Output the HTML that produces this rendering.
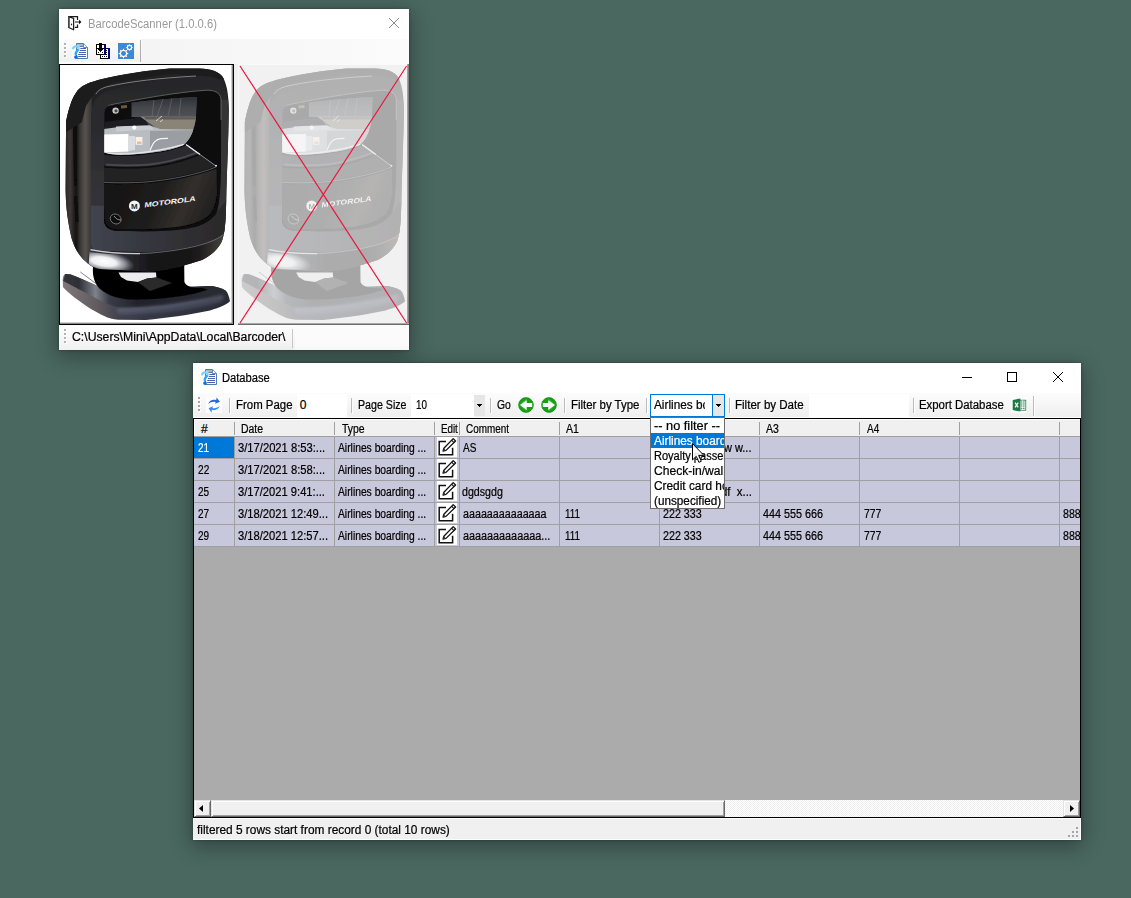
<!DOCTYPE html>
<html><head><meta charset="utf-8"><title>BarcodeScanner</title>
<style>

html,body{margin:0;padding:0}
body{width:1131px;height:898px;background:#4a6860;position:relative;overflow:hidden;font-family:"Liberation Sans",sans-serif;}
.a{position:absolute}
.t{position:absolute;white-space:pre;font-family:"Liberation Sans",sans-serif;-webkit-text-stroke:0.22px currentColor}
.win{position:absolute;background:#fff;box-shadow:0 5px 20px 2px rgba(0,0,0,.33),0 0 3px rgba(0,0,0,.3)}
.sep{position:absolute;width:1px;background:#bdbdbd}
.grip i{position:absolute;width:2px;height:2px;background:#b4b4b4;left:0}
.cell{position:absolute;overflow:hidden;white-space:pre;font-size:11px;line-height:21px;height:21px;color:#000}

</style></head>
<body>
<div class="win" style="left:59px;top:9px;width:350px;height:341px">
<svg class="a" style="left:8px;top:6px" width="16" height="16" viewBox="0 0 16 16"><path d="M1.6,1.6 H10.5 V4.9 M10.5,9.4 V12.3 H7.8" fill="none" stroke="#1c1c1c" stroke-width="1.25"/><path d="M1.7,1.6 L6.6,3.3 V14.8 L1.7,12.5 Z" fill="#fff" stroke="#1c1c1c" stroke-width="1.25" stroke-linejoin="round"/><path d="M1.9,2 V12.3" stroke="#4a4a4a" stroke-width="1.5" fill="none"/><ellipse cx="4.5" cy="9.4" rx=".65" ry=".95" fill="#222"/><rect x="8" y="6.15" width="4.3" height="1.75" fill="#7a7a7a"/><path d="M12,4.7 L14.5,7 L12,9.2 Z" fill="#111"/></svg>
<span class="t" style="left:29.30px;top:6.64px;font-size:12px;line-height:16px;color:#9a9a9a;transform:scaleX(0.9386);transform-origin:0 0;-webkit-text-stroke:0;">BarcodeScanner (1.0.0.6)</span>
<svg class="a" style="left:329px;top:8px" width="12" height="12" viewBox="0 0 12 12"><path d="M1,1 L11,11 M11,1 L1,11" stroke="#8c8c8c" stroke-width="1" fill="none"/></svg>
<div class="a" style="left:0;top:30px;width:350px;height:25px;background:linear-gradient(to right,#f4f4f4 82px,#fbfbfb)"></div>
<div class="a" style="left:0;top:30px;width:83px;height:25px;background:linear-gradient(#fdfdfd,#f1f1f1 88%,#fff 96%);border-radius:0 2px 2px 0"></div>
<div class="a grip" style="left:5px;top:34px;width:3px;height:16px"><i style="top:1px;left:1px;background:#fff"></i><i style="top:0px;background:#b4b4b4"></i><i style="top:5px;left:1px;background:#fff"></i><i style="top:4px;background:#b4b4b4"></i><i style="top:9px;left:1px;background:#fff"></i><i style="top:8px;background:#b4b4b4"></i><i style="top:13px;left:1px;background:#fff"></i><i style="top:12px;background:#b4b4b4"></i></div>
<svg class="a" style="left:13px;top:34px" width="16" height="16" viewBox="0 0 16 16"><rect width="16" height="16" fill="#fdfdfd"/><path d="M4.5,0.5 H11.6 L15.5,4.4 V15.5 H4.5 Z" fill="#fff" stroke="#4f7fa3" stroke-width="1"/><path d="M5,1 H11.4 L11.4,3 L5,2.6 Z" fill="#9fb8c8"/><path d="M11.5,0.8 V4.5 H15.3" fill="#f4f8fb" stroke="#4f7fa3" stroke-width=".9"/><path d="M7.4,3.4 H11 M8.3,5.5 H14 M7.8,7.5 H14 M7,9.5 H14 M6.2,11.5 H14 M6.2,13.5 H14" stroke="#4c60b4" stroke-width="1" fill="none"/><path d="M1.2,5.4 C1.6,3 6.6,2.6 6.6,5.6 C6.6,7.8 3.6,8.4 3.7,11" fill="none" stroke="#7fd2ff" stroke-width="2.3" stroke-linecap="round"/><path d="M5.8,7 C4.8,8.2 3.7,9.2 3.7,11" fill="none" stroke="#27a6f7" stroke-width="2.2" stroke-linecap="round"/><circle cx="4" cy="14.1" r="1.9" fill="#0d6fe6"/></svg>
<svg class="a" style="left:37px;top:34px" width="14" height="16" viewBox="0 0 14 16" shape-rendering="crispEdges"><rect x="3" y="0" width="3" height="1" fill="#000"/><rect x="0" y="1" width="8" height="1" fill="#000"/><rect x="8" y="1" width="2" height="1" fill="#000080"/><rect x="0" y="2" width="1" height="1" fill="#000"/><rect x="1" y="2" width="2" height="1" fill="#fff"/><rect x="3" y="2" width="3" height="1" fill="#000"/><rect x="6" y="2" width="2" height="1" fill="#fff"/><rect x="8" y="2" width="2" height="1" fill="#000080"/><rect x="0" y="3" width="1" height="1" fill="#000"/><rect x="1" y="3" width="2" height="1" fill="#fff"/><rect x="3" y="3" width="3" height="1" fill="#000"/><rect x="6" y="3" width="2" height="1" fill="#fff"/><rect x="8" y="3" width="2" height="1" fill="#000080"/><rect x="0" y="4" width="1" height="1" fill="#000"/><rect x="1" y="4" width="2" height="1" fill="#fff"/><rect x="3" y="4" width="3" height="1" fill="#000"/><rect x="6" y="4" width="2" height="1" fill="#fff"/><rect x="8" y="4" width="2" height="1" fill="#000080"/><rect x="0" y="5" width="8" height="1" fill="#000"/><rect x="8" y="5" width="1" height="1" fill="#000080"/><rect x="9" y="5" width="3" height="1" fill="#000"/><rect x="12" y="5" width="2" height="1" fill="#000080"/><rect x="0" y="6" width="1" height="1" fill="#000"/><rect x="1" y="6" width="1" height="1" fill="#fff"/><rect x="2" y="6" width="5" height="1" fill="#000"/><rect x="7" y="6" width="1" height="1" fill="#fff"/><rect x="8" y="6" width="2" height="1" fill="#000080"/><rect x="10" y="6" width="2" height="1" fill="#fff"/><rect x="12" y="6" width="2" height="1" fill="#000080"/><rect x="0" y="7" width="1" height="1" fill="#000"/><rect x="1" y="7" width="2" height="1" fill="#fff"/><rect x="3" y="7" width="3" height="1" fill="#000"/><rect x="6" y="7" width="2" height="1" fill="#fff"/><rect x="8" y="7" width="2" height="1" fill="#000080"/><rect x="10" y="7" width="1" height="1" fill="#000"/><rect x="11" y="7" width="1" height="1" fill="#fff"/><rect x="12" y="7" width="2" height="1" fill="#000080"/><rect x="0" y="8" width="1" height="1" fill="#000"/><rect x="1" y="8" width="3" height="1" fill="#fff"/><rect x="4" y="8" width="1" height="1" fill="#000"/><rect x="5" y="8" width="3" height="1" fill="#fff"/><rect x="8" y="8" width="2" height="1" fill="#000080"/><rect x="10" y="8" width="2" height="1" fill="#fff"/><rect x="12" y="8" width="2" height="1" fill="#000080"/><rect x="0" y="9" width="1" height="1" fill="#000"/><rect x="1" y="9" width="1" height="1" fill="#fff"/><rect x="2" y="9" width="1" height="1" fill="#000"/><rect x="3" y="9" width="1" height="1" fill="#fff"/><rect x="4" y="9" width="1" height="1" fill="#ddd"/><rect x="5" y="9" width="1" height="1" fill="#fff"/><rect x="6" y="9" width="1" height="1" fill="#000"/><rect x="7" y="9" width="1" height="1" fill="#fff"/><rect x="8" y="9" width="2" height="1" fill="#000080"/><rect x="10" y="9" width="1" height="1" fill="#000"/><rect x="11" y="9" width="1" height="1" fill="#fff"/><rect x="12" y="9" width="2" height="1" fill="#000080"/><rect x="0" y="10" width="1" height="1" fill="#000"/><rect x="1" y="10" width="7" height="1" fill="#fff"/><rect x="8" y="10" width="2" height="1" fill="#000080"/><rect x="10" y="10" width="2" height="1" fill="#fff"/><rect x="12" y="10" width="2" height="1" fill="#000080"/><rect x="0" y="11" width="8" height="1" fill="#000"/><rect x="8" y="11" width="2" height="1" fill="#000080"/><rect x="10" y="11" width="1" height="1" fill="#000"/><rect x="11" y="11" width="1" height="1" fill="#fff"/><rect x="12" y="11" width="2" height="1" fill="#000080"/><rect x="4" y="12" width="1" height="1" fill="#000"/><rect x="5" y="12" width="7" height="1" fill="#fff"/><rect x="12" y="12" width="2" height="1" fill="#000080"/><rect x="4" y="13" width="1" height="1" fill="#000"/><rect x="5" y="13" width="1" height="1" fill="#fff"/><rect x="6" y="13" width="1" height="1" fill="#000"/><rect x="7" y="13" width="1" height="1" fill="#fff"/><rect x="8" y="13" width="1" height="1" fill="#000"/><rect x="9" y="13" width="1" height="1" fill="#fff"/><rect x="10" y="13" width="1" height="1" fill="#000"/><rect x="11" y="13" width="1" height="1" fill="#fff"/><rect x="12" y="13" width="2" height="1" fill="#000080"/><rect x="4" y="14" width="1" height="1" fill="#000"/><rect x="5" y="14" width="7" height="1" fill="#fff"/><rect x="12" y="14" width="2" height="1" fill="#000080"/><rect x="4" y="15" width="8" height="1" fill="#000"/><rect x="12" y="15" width="2" height="1" fill="#000080"/></svg>
<svg class="a" style="left:59px;top:34px" width="16" height="16" viewBox="0 0 16 16"><rect width="16" height="16" fill="#3b8ad6"/><polygon points="10.21,9.97 10.21,11.13 9.32,11.02 8.53,12.92 9.24,13.48 8.43,14.29 7.87,13.58 5.97,14.37 6.08,15.26 4.92,15.26 5.03,14.37 3.13,13.58 2.57,14.29 1.76,13.48 2.47,12.92 1.68,11.02 0.79,11.13 0.79,9.97 1.68,10.08 2.47,8.18 1.76,7.62 2.57,6.81 3.13,7.52 5.03,6.73 4.92,5.84 6.08,5.84 5.97,6.73 7.87,7.52 8.43,6.81 9.24,7.62 8.53,8.18 9.32,10.08" fill="#fff"/><circle cx="5.5" cy="10.55" r="2.45" fill="#3886d6"/><polygon points="14.82,4.09 14.82,4.91 14.18,4.83 13.62,6.19 14.13,6.59 13.54,7.18 13.14,6.67 11.78,7.23 11.86,7.87 11.04,7.87 11.12,7.23 9.76,6.67 9.36,7.18 8.77,6.59 9.28,6.19 8.72,4.83 8.08,4.91 8.08,4.09 8.72,4.17 9.28,2.81 8.77,2.41 9.36,1.82 9.76,2.33 11.12,1.77 11.04,1.13 11.86,1.13 11.78,1.77 13.14,2.33 13.54,1.82 14.13,2.41 13.62,2.81 14.18,4.17" fill="#fff"/><circle cx="11.45" cy="4.5" r="1.45" fill="#3886d6"/></svg>
<div class="sep" style="left:81px;top:31px;height:22px;background:#b0b0b0"></div>
<div class="a" style="left:0;top:55px;width:175px;height:261px;background:#000"></div>
<div class="a" style="left:1px;top:56px;width:173px;height:259px;background:#fff;overflow:hidden"><svg class="a" style="left:0;top:0" width="173" height="259" viewBox="60 65 173 259">
<defs>
 <linearGradient id="gSidea" gradientUnits="userSpaceOnUse" x1="65" y1="0" x2="92" y2="0">
  <stop offset="0" stop-color="#2a2726"/><stop offset=".2" stop-color="#3b3735"/><stop offset=".42" stop-color="#141313"/><stop offset=".55" stop-color="#3a3634"/><stop offset=".75" stop-color="#57524f"/><stop offset=".95" stop-color="#3b3938"/><stop offset="1" stop-color="#2a2a2d"/>
 </linearGradient>
 <linearGradient id="gFronta" x1="0" y1="0" x2="0" y2="1">
  <stop offset="0" stop-color="#272729"/><stop offset=".5" stop-color="#2e2f33"/><stop offset="1" stop-color="#33343c"/>
 </linearGradient>
 <linearGradient id="gLowa" gradientUnits="userSpaceOnUse" x1="91" y1="0" x2="226" y2="0">
  <stop offset="0" stop-color="#41444f"/><stop offset=".35" stop-color="#373941"/><stop offset=".7" stop-color="#2f2f33"/><stop offset="1" stop-color="#2b2929"/>
 </linearGradient>
 <linearGradient id="gGlassa" gradientUnits="userSpaceOnUse" x1="0" y1="97" x2="0" y2="117">
  <stop offset="0" stop-color="#2e3034"/><stop offset=".5" stop-color="#43464b"/><stop offset="1" stop-color="#505257"/>
 </linearGradient>
 <linearGradient id="gPanela" gradientUnits="userSpaceOnUse" x1="110" y1="185" x2="210" y2="230">
  <stop offset="0" stop-color="#151414"/><stop offset=".45" stop-color="#1f1d1c"/><stop offset=".7" stop-color="#332f2d"/><stop offset="1" stop-color="#1d1b1b"/>
 </linearGradient>
 <linearGradient id="gUndera" gradientUnits="userSpaceOnUse" x1="84" y1="0" x2="226" y2="0">
  <stop offset="0" stop-color="#3a3b40"/><stop offset=".3" stop-color="#2a2b30"/><stop offset=".5" stop-color="#121213"/><stop offset=".8" stop-color="#1b1a1a"/><stop offset="1" stop-color="#4a4542"/>
 </linearGradient>
 <radialGradient id="gHia" gradientUnits="userSpaceOnUse" cx="104" cy="261.5" r="31" gradientTransform="translate(104 261.5) scale(1 .36) translate(-104 -261.5)">
  <stop offset="0" stop-color="#fff" stop-opacity="1"/><stop offset=".4" stop-color="#f6f7f9" stop-opacity=".96"/><stop offset=".7" stop-color="#c9ccd4" stop-opacity=".6"/><stop offset="1" stop-color="#8a8c96" stop-opacity="0"/>
 </radialGradient>
 <linearGradient id="gBasea" gradientUnits="userSpaceOnUse" x1="62" y1="0" x2="230" y2="0">
  <stop offset="0" stop-color="#7f777a"/><stop offset=".2" stop-color="#635d60"/><stop offset=".33" stop-color="#43434f"/><stop offset=".5" stop-color="#353846"/><stop offset="1" stop-color="#2a2c35"/>
 </linearGradient>
 <linearGradient id="gBaseTopa" gradientUnits="userSpaceOnUse" x1="62" y1="0" x2="230" y2="0">
  <stop offset="0" stop-color="#34353c"/><stop offset=".1" stop-color="#2e2f37"/><stop offset=".2" stop-color="#7d828c"/><stop offset=".28" stop-color="#3a3c46"/><stop offset=".45" stop-color="#22232a"/><stop offset="1" stop-color="#2a2c34"/>
 </linearGradient>
 <filter id="b1a" x="-10%" y="-10%" width="120%" height="120%"><feGaussianBlur stdDeviation="0.55"/></filter>
 <filter id="b2a" x="-30%" y="-30%" width="160%" height="160%"><feGaussianBlur stdDeviation="1.4"/></filter>
 <clipPath id="cBodya"><path d="M66,132 L65.6,190 C66,210 68,222 71.5,238 C75,250 80,256 84,260 C90,266 95,268 100,269 L150,271.5 C170,270 190,264 202,260 C212,255 219,248 222,241 C225,233 226,222 226.4,190 L228.4,132 L228.8,110 C228.6,95 227,83 222,76 C217,70 208,68.4 194,68.4 L170,68.4 C150,70 120,74 98,80 C88,83 80,86 76,93 C71,100 68,112 66,122 Z"/></clipPath>
 <clipPath id="cUndera"><path d="M89.5,252 C100,254 130,255.5 150,254.5 L226,240 L226,276 L88,276 Z"/></clipPath>
 <clipPath id="cGlassa"><path d="M104.3,112 C105,108.5 106.5,106.8 108.3,106.1 C135,101.5 170,98.2 196.9,96.9 L195.9,117.6 C195.4,123 194.5,126 193.4,129.1 C192,134 190,138 187.7,140.6 C186.5,142.5 185,144 183,145.2 C175,148.5 165,150.8 155.5,152.1 C145,153.8 130,155 121,155 C115,154.8 109,154 104.3,152.6 Z"/></clipPath>
</defs>
<g filter="url(#b1a)">
 <!-- base -->
 <path d="M65.2,274 C63,275 62.5,279 62.8,282 L63,287 C68,293 80,302 91.4,309.2 C100,314 108,319 118,319.8 L146,320 C165,318 190,315 210,310.5 C220,307.5 228,304 230,301 C229,296 227.5,292 225.6,290.5 C220,287.5 214,285.8 208,286 L150,288 L100,287 C88,282 76,276 70,274 Z" fill="url(#gBasea)"/>
 <path d="M65.2,274 C70,273.5 76,276 100,287 L112,294 L208,286 C214,285.8 220,287.5 225.6,290.5 C222,294.5 200,300 170,304.5 C150,307 130,308 118,307.4 C110,305 104,302.5 98.4,299.5 L63.2,281 Z" fill="url(#gBaseTopa)"/>
 <path d="M116,308 C140,308 180,304 222,295 L224,298.5 C200,305 150,313 118,313.5 Z" fill="#6b7086" opacity=".55" filter="url(#b2a)"/>
 <path d="M120,313 C150,313.5 190,309 222,300" fill="none" stroke="#4d5164" stroke-width="3" opacity=".7" filter="url(#b2a)"/>
 <path d="M80.3,272 L98,285" stroke="#333" stroke-width=".6" fill="none"/>
 <!-- stand -->
 <path d="M93,266 L184.2,263 L184.4,282 C186,286 192,288.5 202,287.8 L208,289.5 C190,297 150,300.5 128,299.5 C110,297.5 99,290.5 95.5,283 C93,278 92.5,272 93,266 Z" fill="#060606"/>
 <path d="M118.5,272.6 L156,272.4 L156.4,277.5 L147,278.5 L138,282 L127,280.5 L121,277 Z" fill="#ececee"/>
 <path d="M138,282 L147,278.5 L156.4,277.5 L172,283 L150,291 Z" fill="#2a292c"/>
 <!-- body -->
 <g clip-path="url(#cBodya)">
  <rect x="60" y="65" width="173" height="210" fill="#222224"/>
  <rect x="62" y="65" width="30" height="210" fill="url(#gSidea)"/>
  <path d="M73,120 L76.5,118 L77,185 L74,186 Z M74,196 L77.2,196 L78.5,222 L75.5,222 Z" fill="#070707"/>
  <path d="M62,105 L80,86 L100,78.5 L170,66 L232,66 L232,80 L170,73.5 L112,83 L95,92 L86,106 L82,122 L62,135 Z" fill="#1d1c1c"/>
  <!-- front face -->
  <path d="M91,120 C91,104 96,95 108,91 C130,84 170,77 196,76 C212,75.5 222,78 225,88 C227,96 228.6,104 228.8,110 L228.4,132 L226.4,190 C226,222 225,233 224,234 C215,242 190,248 150,252 L96,250.5 C92,250 91,247 91,240 Z" fill="url(#gFronta)"/>
  <path d="M218,100 L229,100 L227,232 L218,236 Z" fill="#3a3838" opacity=".8"/>
  <path d="M91,205 L104,205 L104,222 C106,228 112,231 120,231 L150,232 C185,230 205,224 217,212 L226.5,200 L226,222 C225.6,230 225,233 224,234 C215,242 190,248 150,252 L96,250.5 C92,250 91,247 91,240 Z" fill="url(#gLowa)"/>
  <path d="M91,170 L104,170 L104,206 L91,206 Z" fill="#303238" opacity=".7"/>
  <!-- under surface -->
  <path d="M90,249.3 L91,249.5 C110,252.8 130,253.8 150,252.8 C190,249.2 215,242.2 224.5,233.2 L226,262 L150,276 L86,273 L88,256 Z" fill="url(#gUndera)"/>
  <g clip-path="url(#cUndera)"><ellipse cx="104" cy="261.5" rx="31" ry="11.2" fill="url(#gHia)" transform="rotate(9 104 261.5)"/></g>
  <path d="M91,250 C110,253.2 130,254.2 150,253.2 C190,249.6 215,242.6 224.5,233.6" fill="none" stroke="#77787f" stroke-width=".8"/><path d="M90.5,249.6 C105,252.6 120,253.8 140,253.6" fill="none" stroke="#c9ccd2" stroke-width="1.1"/>
 </g>
 <!-- ridge highlight -->
 <path d="M96,94 C98,90 102,88 108,86.5 C130,81.5 160,78 196,76" fill="none" stroke="#7d7f84" stroke-width="1"/>
 <!-- opening -->
 <path d="M104,120 C104,111 106,106 112,104.5 C140,99 175,92.5 205,90.3 C214,89.8 220,92 221,99 L221,160 C221,185 220,205 216,214 C210,222 200,227 185,229 C170,231 150,232 120,231 C110,231 104,228 104,220 Z" fill="#0b0b0c"/>
 <path d="M105,112 C106,107.5 108,105.3 112,104.5 C140,99 175,92.5 205,90.3 C214,89.8 220,92 221,99 L221,120" fill="none" stroke="#6d6f74" stroke-width=".8"/>
 <!-- glass -->
 <g clip-path="url(#cGlassa)">
  <rect x="104" y="96" width="94" height="60" fill="#45484d"/>
  <path d="M131,96 L198,96 L198,117 L131,117 Z" fill="url(#gGlassa)"/>
  <path d="M104,96 L131.5,96 L131.5,117 L144,117.5 L144,122 L126,124.5 L104,127.5 Z" fill="#0d0d0f"/>
  <path d="M104,122 L144,117 L150,128 L104,130 Z" fill="#1b1d21"/>
  <path d="M140,116.6 L197,116.8 L197,130 L158,129.2 Z" fill="#8a8478"/>
  <path d="M144,117 L197,117.2 L197,119.5 L146,119.5 Z" fill="#5b5a58"/>
  <path d="M104,129 L126,126 L150,125.5 L160,129 L197,129.5 L197,156 L104,156 Z" fill="#b9bdc2"/>
  <path d="M150,131 L197,130 L197,156 L150,156 Z" fill="#9a9da1"/>
  <path d="M116,126.5 L150,125.5 L154,129.5 L116,131.5 Z" fill="#c9cdd2"/>
  <path d="M104,134.5 L128.5,134 L128.5,151.5 L104,152.5 Z" fill="#ffffff"/>
  <path d="M128.5,136 L135,136 L135,150 L128.5,151 Z" fill="#d9dde2"/>
  <path d="M135.6,137 L142.4,137 L142.4,144.8 L135.6,144.8 Z" fill="#fbefe6"/>
  <path d="M137,141.5 L141.5,141.5 L141.5,144 L137,144 Z" fill="#e9b9a0"/>
  <path d="M150,150.5 C153,142 156,139.2 161,138.6 L168,138.4" fill="none" stroke="#f6f6f6" stroke-width="1.1"/>
  <path d="M154,100 L152,117 M163,99 L156,120 M172,98 L168,116 M181,97.5 L179,116" fill="none" stroke="#7b8088" stroke-width=".45"/>
  <path d="M156,121 L162,116 M160,122 L163,119.5" fill="none" stroke="#e8eaec" stroke-width=".8"/>
  <path d="M104,153 C120,155.2 150,153.8 184,144.5" fill="none" stroke="#e4e6ea" stroke-width="1.3"/>
 </g>
 <circle cx="115.6" cy="110.6" r="3.2" fill="#c4c6c9"/><circle cx="116" cy="110.8" r="1.6" fill="#47474a"/>
 <path d="M121,105.5 L127,105 L127,108 L121,108.4 Z" fill="#6a5a3a"/>
 <circle cx="134.3" cy="127.6" r="2.1" fill="#fff"/>
 <!-- lower bezels -->
 <path d="M104,154.5 C115,156.5 130,156.5 146,154.5 C160,153 175,150 186,145.5 L200,153.5 C180,161.5 160,165.5 146,166.5 C130,167.5 115,167 104,166 Z" fill="#2b2b2d"/><path d="M106,164.6 C120,165.6 135,165.6 148,164.6 C165,163 182,158.5 197,152.6" fill="none" stroke="#4a4b50" stroke-width="1.6"/>
 <path d="M104,167.5 C115,168.5 130,169 146,168 C165,166.5 185,161.5 201,154.5 L216,166 C200,173 170,179 146,181 C130,182 115,182 104,181.5 Z" fill="#232221"/>
 <path d="M186,144.5 L216,166" fill="none" stroke="#8f959d" stroke-width=".9"/><path d="M186,144.5 L200,154.5" fill="none" stroke="#e6ebf0" stroke-width="1.5"/><circle cx="216" cy="165.8" r="1" fill="#e8e8e8"/>
 <path d="M104,182.3 C115,183 130,183 146,182 C170,180 200,174 216,167" fill="none" stroke="#5f626a" stroke-width=".9"/>
 <!-- logo panel -->
 <path d="M104,184 C115,184.6 130,184.6 146,183.6 C170,181.6 200,175.5 216.5,168.5 L217,196 C216.5,206 214,212 208,217 C200,223 190,225.5 180,227 C165,229.3 150,230.2 120,230 C110,230 104.5,227 104.5,219 Z" fill="url(#gPanela)"/>
 <path d="M104.5,219 C104.5,227 110,230 120,230 C150,230.2 165,229.3 180,227 C190,225.5 200,223 208,217 C214,212 216.5,206 217,196" fill="none" stroke="#060606" stroke-width="1.2"/>
 <!-- sensor -->
 <ellipse cx="115.7" cy="219" rx="5.6" ry="4.8" fill="#0c0c0c" stroke="#8a8a8a" stroke-width=".7" transform="rotate(25 115.7 219)"/>
 <path d="M114,216 C116,219 118,220 121,220" fill="none" stroke="#c8c8c8" stroke-width=".7"/>
</g>
<!-- logo -->
<circle cx="134.4" cy="205.9" r="5.5" fill="#f4f4f4"/>
<text x="134.4" y="209" text-anchor="middle" font-family="Liberation Sans, sans-serif" font-weight="bold" font-size="8" fill="#2a2a2a">M</text>
<text transform="translate(144.3,207.6) rotate(-7.4) skewX(-14)" font-family="Liberation Sans, sans-serif" font-weight="bold" font-size="7" textLength="51.5" lengthAdjust="spacingAndGlyphs" fill="#f2f2f2">MOTOROLA</text>
<rect x="231.6" y="65" width="1.4" height="259" fill="#8a8a8a"/><rect x="60" y="322.6" width="173" height="1.4" fill="#8a8a8a"/></svg></div>
<div class="a" style="left:175px;top:55px;width:4px;height:261px;background:#f0f0f0"></div>
<div class="a" style="left:179px;top:55px;width:171px;height:261px;background:#f1f1f1;overflow:hidden"><svg class="a" style="left:0;top:0" width="171" height="261" viewBox="238 64 171 261"><g transform="translate(239,65) scale(0.9769,1) translate(-60,-65)" opacity="0.31">
<defs>
 <linearGradient id="gSideb" gradientUnits="userSpaceOnUse" x1="65" y1="0" x2="92" y2="0">
  <stop offset="0" stop-color="#2a2726"/><stop offset=".2" stop-color="#3b3735"/><stop offset=".42" stop-color="#141313"/><stop offset=".55" stop-color="#3a3634"/><stop offset=".75" stop-color="#57524f"/><stop offset=".95" stop-color="#3b3938"/><stop offset="1" stop-color="#2a2a2d"/>
 </linearGradient>
 <linearGradient id="gFrontb" x1="0" y1="0" x2="0" y2="1">
  <stop offset="0" stop-color="#272729"/><stop offset=".5" stop-color="#2e2f33"/><stop offset="1" stop-color="#33343c"/>
 </linearGradient>
 <linearGradient id="gLowb" gradientUnits="userSpaceOnUse" x1="91" y1="0" x2="226" y2="0">
  <stop offset="0" stop-color="#41444f"/><stop offset=".35" stop-color="#373941"/><stop offset=".7" stop-color="#2f2f33"/><stop offset="1" stop-color="#2b2929"/>
 </linearGradient>
 <linearGradient id="gGlassb" gradientUnits="userSpaceOnUse" x1="0" y1="97" x2="0" y2="117">
  <stop offset="0" stop-color="#2e3034"/><stop offset=".5" stop-color="#43464b"/><stop offset="1" stop-color="#505257"/>
 </linearGradient>
 <linearGradient id="gPanelb" gradientUnits="userSpaceOnUse" x1="110" y1="185" x2="210" y2="230">
  <stop offset="0" stop-color="#151414"/><stop offset=".45" stop-color="#1f1d1c"/><stop offset=".7" stop-color="#332f2d"/><stop offset="1" stop-color="#1d1b1b"/>
 </linearGradient>
 <linearGradient id="gUnderb" gradientUnits="userSpaceOnUse" x1="84" y1="0" x2="226" y2="0">
  <stop offset="0" stop-color="#3a3b40"/><stop offset=".3" stop-color="#2a2b30"/><stop offset=".5" stop-color="#121213"/><stop offset=".8" stop-color="#1b1a1a"/><stop offset="1" stop-color="#4a4542"/>
 </linearGradient>
 <radialGradient id="gHib" gradientUnits="userSpaceOnUse" cx="104" cy="261.5" r="31" gradientTransform="translate(104 261.5) scale(1 .36) translate(-104 -261.5)">
  <stop offset="0" stop-color="#fff" stop-opacity="1"/><stop offset=".4" stop-color="#f6f7f9" stop-opacity=".96"/><stop offset=".7" stop-color="#c9ccd4" stop-opacity=".6"/><stop offset="1" stop-color="#8a8c96" stop-opacity="0"/>
 </radialGradient>
 <linearGradient id="gBaseb" gradientUnits="userSpaceOnUse" x1="62" y1="0" x2="230" y2="0">
  <stop offset="0" stop-color="#7f777a"/><stop offset=".2" stop-color="#635d60"/><stop offset=".33" stop-color="#43434f"/><stop offset=".5" stop-color="#353846"/><stop offset="1" stop-color="#2a2c35"/>
 </linearGradient>
 <linearGradient id="gBaseTopb" gradientUnits="userSpaceOnUse" x1="62" y1="0" x2="230" y2="0">
  <stop offset="0" stop-color="#34353c"/><stop offset=".1" stop-color="#2e2f37"/><stop offset=".2" stop-color="#7d828c"/><stop offset=".28" stop-color="#3a3c46"/><stop offset=".45" stop-color="#22232a"/><stop offset="1" stop-color="#2a2c34"/>
 </linearGradient>
 <filter id="b1b" x="-10%" y="-10%" width="120%" height="120%"><feGaussianBlur stdDeviation="0.55"/></filter>
 <filter id="b2b" x="-30%" y="-30%" width="160%" height="160%"><feGaussianBlur stdDeviation="1.4"/></filter>
 <clipPath id="cBodyb"><path d="M66,132 L65.6,190 C66,210 68,222 71.5,238 C75,250 80,256 84,260 C90,266 95,268 100,269 L150,271.5 C170,270 190,264 202,260 C212,255 219,248 222,241 C225,233 226,222 226.4,190 L228.4,132 L228.8,110 C228.6,95 227,83 222,76 C217,70 208,68.4 194,68.4 L170,68.4 C150,70 120,74 98,80 C88,83 80,86 76,93 C71,100 68,112 66,122 Z"/></clipPath>
 <clipPath id="cUnderb"><path d="M89.5,252 C100,254 130,255.5 150,254.5 L226,240 L226,276 L88,276 Z"/></clipPath>
 <clipPath id="cGlassb"><path d="M104.3,112 C105,108.5 106.5,106.8 108.3,106.1 C135,101.5 170,98.2 196.9,96.9 L195.9,117.6 C195.4,123 194.5,126 193.4,129.1 C192,134 190,138 187.7,140.6 C186.5,142.5 185,144 183,145.2 C175,148.5 165,150.8 155.5,152.1 C145,153.8 130,155 121,155 C115,154.8 109,154 104.3,152.6 Z"/></clipPath>
</defs>
<g filter="url(#b1b)">
 <!-- base -->
 <path d="M65.2,274 C63,275 62.5,279 62.8,282 L63,287 C68,293 80,302 91.4,309.2 C100,314 108,319 118,319.8 L146,320 C165,318 190,315 210,310.5 C220,307.5 228,304 230,301 C229,296 227.5,292 225.6,290.5 C220,287.5 214,285.8 208,286 L150,288 L100,287 C88,282 76,276 70,274 Z" fill="url(#gBaseb)"/>
 <path d="M65.2,274 C70,273.5 76,276 100,287 L112,294 L208,286 C214,285.8 220,287.5 225.6,290.5 C222,294.5 200,300 170,304.5 C150,307 130,308 118,307.4 C110,305 104,302.5 98.4,299.5 L63.2,281 Z" fill="url(#gBaseTopb)"/>
 <path d="M116,308 C140,308 180,304 222,295 L224,298.5 C200,305 150,313 118,313.5 Z" fill="#6b7086" opacity=".55" filter="url(#b2b)"/>
 <path d="M120,313 C150,313.5 190,309 222,300" fill="none" stroke="#4d5164" stroke-width="3" opacity=".7" filter="url(#b2b)"/>
 <path d="M80.3,272 L98,285" stroke="#333" stroke-width=".6" fill="none"/>
 <!-- stand -->
 <path d="M93,266 L184.2,263 L184.4,282 C186,286 192,288.5 202,287.8 L208,289.5 C190,297 150,300.5 128,299.5 C110,297.5 99,290.5 95.5,283 C93,278 92.5,272 93,266 Z" fill="#060606"/>
 <path d="M118.5,272.6 L156,272.4 L156.4,277.5 L147,278.5 L138,282 L127,280.5 L121,277 Z" fill="#ececee"/>
 <path d="M138,282 L147,278.5 L156.4,277.5 L172,283 L150,291 Z" fill="#2a292c"/>
 <!-- body -->
 <g clip-path="url(#cBodyb)">
  <rect x="60" y="65" width="173" height="210" fill="#222224"/>
  <rect x="62" y="65" width="30" height="210" fill="url(#gSideb)"/>
  <path d="M73,120 L76.5,118 L77,185 L74,186 Z M74,196 L77.2,196 L78.5,222 L75.5,222 Z" fill="#070707"/>
  <path d="M62,105 L80,86 L100,78.5 L170,66 L232,66 L232,80 L170,73.5 L112,83 L95,92 L86,106 L82,122 L62,135 Z" fill="#1d1c1c"/>
  <!-- front face -->
  <path d="M91,120 C91,104 96,95 108,91 C130,84 170,77 196,76 C212,75.5 222,78 225,88 C227,96 228.6,104 228.8,110 L228.4,132 L226.4,190 C226,222 225,233 224,234 C215,242 190,248 150,252 L96,250.5 C92,250 91,247 91,240 Z" fill="url(#gFrontb)"/>
  <path d="M218,100 L229,100 L227,232 L218,236 Z" fill="#3a3838" opacity=".8"/>
  <path d="M91,205 L104,205 L104,222 C106,228 112,231 120,231 L150,232 C185,230 205,224 217,212 L226.5,200 L226,222 C225.6,230 225,233 224,234 C215,242 190,248 150,252 L96,250.5 C92,250 91,247 91,240 Z" fill="url(#gLowb)"/>
  <path d="M91,170 L104,170 L104,206 L91,206 Z" fill="#303238" opacity=".7"/>
  <!-- under surface -->
  <path d="M90,249.3 L91,249.5 C110,252.8 130,253.8 150,252.8 C190,249.2 215,242.2 224.5,233.2 L226,262 L150,276 L86,273 L88,256 Z" fill="url(#gUnderb)"/>
  <g clip-path="url(#cUnderb)"><ellipse cx="104" cy="261.5" rx="31" ry="11.2" fill="url(#gHib)" transform="rotate(9 104 261.5)"/></g>
  <path d="M91,250 C110,253.2 130,254.2 150,253.2 C190,249.6 215,242.6 224.5,233.6" fill="none" stroke="#77787f" stroke-width=".8"/><path d="M90.5,249.6 C105,252.6 120,253.8 140,253.6" fill="none" stroke="#c9ccd2" stroke-width="1.1"/>
 </g>
 <!-- ridge highlight -->
 <path d="M96,94 C98,90 102,88 108,86.5 C130,81.5 160,78 196,76" fill="none" stroke="#7d7f84" stroke-width="1"/>
 <!-- opening -->
 <path d="M104,120 C104,111 106,106 112,104.5 C140,99 175,92.5 205,90.3 C214,89.8 220,92 221,99 L221,160 C221,185 220,205 216,214 C210,222 200,227 185,229 C170,231 150,232 120,231 C110,231 104,228 104,220 Z" fill="#0b0b0c"/>
 <path d="M105,112 C106,107.5 108,105.3 112,104.5 C140,99 175,92.5 205,90.3 C214,89.8 220,92 221,99 L221,120" fill="none" stroke="#6d6f74" stroke-width=".8"/>
 <!-- glass -->
 <g clip-path="url(#cGlassb)">
  <rect x="104" y="96" width="94" height="60" fill="#45484d"/>
  <path d="M131,96 L198,96 L198,117 L131,117 Z" fill="url(#gGlassb)"/>
  <path d="M104,96 L131.5,96 L131.5,117 L144,117.5 L144,122 L126,124.5 L104,127.5 Z" fill="#0d0d0f"/>
  <path d="M104,122 L144,117 L150,128 L104,130 Z" fill="#1b1d21"/>
  <path d="M140,116.6 L197,116.8 L197,130 L158,129.2 Z" fill="#8a8478"/>
  <path d="M144,117 L197,117.2 L197,119.5 L146,119.5 Z" fill="#5b5a58"/>
  <path d="M104,129 L126,126 L150,125.5 L160,129 L197,129.5 L197,156 L104,156 Z" fill="#b9bdc2"/>
  <path d="M150,131 L197,130 L197,156 L150,156 Z" fill="#9a9da1"/>
  <path d="M116,126.5 L150,125.5 L154,129.5 L116,131.5 Z" fill="#c9cdd2"/>
  <path d="M104,134.5 L128.5,134 L128.5,151.5 L104,152.5 Z" fill="#ffffff"/>
  <path d="M128.5,136 L135,136 L135,150 L128.5,151 Z" fill="#d9dde2"/>
  <path d="M135.6,137 L142.4,137 L142.4,144.8 L135.6,144.8 Z" fill="#fbefe6"/>
  <path d="M137,141.5 L141.5,141.5 L141.5,144 L137,144 Z" fill="#e9b9a0"/>
  <path d="M150,150.5 C153,142 156,139.2 161,138.6 L168,138.4" fill="none" stroke="#f6f6f6" stroke-width="1.1"/>
  <path d="M154,100 L152,117 M163,99 L156,120 M172,98 L168,116 M181,97.5 L179,116" fill="none" stroke="#7b8088" stroke-width=".45"/>
  <path d="M156,121 L162,116 M160,122 L163,119.5" fill="none" stroke="#e8eaec" stroke-width=".8"/>
  <path d="M104,153 C120,155.2 150,153.8 184,144.5" fill="none" stroke="#e4e6ea" stroke-width="1.3"/>
 </g>
 <circle cx="115.6" cy="110.6" r="3.2" fill="#c4c6c9"/><circle cx="116" cy="110.8" r="1.6" fill="#47474a"/>
 <path d="M121,105.5 L127,105 L127,108 L121,108.4 Z" fill="#6a5a3a"/>
 <circle cx="134.3" cy="127.6" r="2.1" fill="#fff"/>
 <!-- lower bezels -->
 <path d="M104,154.5 C115,156.5 130,156.5 146,154.5 C160,153 175,150 186,145.5 L200,153.5 C180,161.5 160,165.5 146,166.5 C130,167.5 115,167 104,166 Z" fill="#2b2b2d"/><path d="M106,164.6 C120,165.6 135,165.6 148,164.6 C165,163 182,158.5 197,152.6" fill="none" stroke="#4a4b50" stroke-width="1.6"/>
 <path d="M104,167.5 C115,168.5 130,169 146,168 C165,166.5 185,161.5 201,154.5 L216,166 C200,173 170,179 146,181 C130,182 115,182 104,181.5 Z" fill="#232221"/>
 <path d="M186,144.5 L216,166" fill="none" stroke="#8f959d" stroke-width=".9"/><path d="M186,144.5 L200,154.5" fill="none" stroke="#e6ebf0" stroke-width="1.5"/><circle cx="216" cy="165.8" r="1" fill="#e8e8e8"/>
 <path d="M104,182.3 C115,183 130,183 146,182 C170,180 200,174 216,167" fill="none" stroke="#5f626a" stroke-width=".9"/>
 <!-- logo panel -->
 <path d="M104,184 C115,184.6 130,184.6 146,183.6 C170,181.6 200,175.5 216.5,168.5 L217,196 C216.5,206 214,212 208,217 C200,223 190,225.5 180,227 C165,229.3 150,230.2 120,230 C110,230 104.5,227 104.5,219 Z" fill="url(#gPanelb)"/>
 <path d="M104.5,219 C104.5,227 110,230 120,230 C150,230.2 165,229.3 180,227 C190,225.5 200,223 208,217 C214,212 216.5,206 217,196" fill="none" stroke="#060606" stroke-width="1.2"/>
 <!-- sensor -->
 <ellipse cx="115.7" cy="219" rx="5.6" ry="4.8" fill="#0c0c0c" stroke="#8a8a8a" stroke-width=".7" transform="rotate(25 115.7 219)"/>
 <path d="M114,216 C116,219 118,220 121,220" fill="none" stroke="#c8c8c8" stroke-width=".7"/>
</g>
<!-- logo -->
<circle cx="134.4" cy="205.9" r="5.5" fill="#f4f4f4"/>
<text x="134.4" y="209" text-anchor="middle" font-family="Liberation Sans, sans-serif" font-weight="bold" font-size="8" fill="#2a2a2a">M</text>
<text transform="translate(144.3,207.6) rotate(-7.4) skewX(-14)" font-family="Liberation Sans, sans-serif" font-weight="bold" font-size="7" textLength="51.5" lengthAdjust="spacingAndGlyphs" fill="#f2f2f2">MOTOROLA</text>
</g><path d="M238.5,64 V325 M238,64.5 H409" stroke="#fafafa" stroke-width="1" fill="none"/><rect x="407.3" y="64" width="1.7" height="261" fill="#808080"/><rect x="238" y="323" width="171" height="1" fill="#a8a8a8"/><rect x="238" y="324" width="171" height="1" fill="#6c6c6c"/><path d="M240,66 L406.6,323 M406.6,66 L240,323" stroke="#ea163f" stroke-width="1.2" fill="none"/></svg></div>
<div class="a" style="left:0;top:316px;width:350px;height:25px;background:#fbfbfb"></div>
<div class="a" style="left:0;top:316px;width:236px;height:25px;background:linear-gradient(#fdfdfd,#f1f1f1);border-radius:0 2px 2px 0"></div>
<div class="a grip" style="left:5px;top:320px;width:3px;height:16px"><i style="top:1px;left:1px;background:#fff"></i><i style="top:0px;background:#b4b4b4"></i><i style="top:5px;left:1px;background:#fff"></i><i style="top:4px;background:#b4b4b4"></i><i style="top:9px;left:1px;background:#fff"></i><i style="top:8px;background:#b4b4b4"></i><i style="top:13px;left:1px;background:#fff"></i><i style="top:12px;background:#b4b4b4"></i></div>
<span class="t" style="left:13.30px;top:319.84px;font-size:12px;line-height:16px;color:#000;transform:scaleX(1.0194);transform-origin:0 0;">C:\Users\Mini\AppData\Local\Barcoder\</span>
<div class="sep" style="left:233px;top:320px;height:19px;background:#c8c8c8"></div>
</div>
<div class="win" style="left:193px;top:363px;width:888px;height:477px">
<svg class="a" style="left:8px;top:6px" width="16" height="16" viewBox="0 0 16 16"><rect width="16" height="16" fill="#fdfdfd"/><path d="M4.5,0.5 H11.6 L15.5,4.4 V15.5 H4.5 Z" fill="#fff" stroke="#4f7fa3" stroke-width="1"/><path d="M5,1 H11.4 L11.4,3 L5,2.6 Z" fill="#9fb8c8"/><path d="M11.5,0.8 V4.5 H15.3" fill="#f4f8fb" stroke="#4f7fa3" stroke-width=".9"/><path d="M7.4,3.4 H11 M8.3,5.5 H14 M7.8,7.5 H14 M7,9.5 H14 M6.2,11.5 H14 M6.2,13.5 H14" stroke="#4c60b4" stroke-width="1" fill="none"/><path d="M1.2,5.4 C1.6,3 6.6,2.6 6.6,5.6 C6.6,7.8 3.6,8.4 3.7,11" fill="none" stroke="#7fd2ff" stroke-width="2.3" stroke-linecap="round"/><path d="M5.8,7 C4.8,8.2 3.7,9.2 3.7,11" fill="none" stroke="#27a6f7" stroke-width="2.2" stroke-linecap="round"/><circle cx="4" cy="14.1" r="1.9" fill="#0d6fe6"/></svg>
<span class="t" style="left:29.40px;top:6.64px;font-size:12px;line-height:16px;color:#000;transform:scaleX(0.9304);transform-origin:0 0;">Database</span>
<svg class="a" style="left:769px;top:9px" width="112" height="12" viewBox="0 0 112 12" shape-rendering="crispEdges"><path d="M0,5.5 H10" stroke="#000" stroke-width="1" fill="none"/><rect x="45.5" y="0.5" width="9" height="9" stroke="#000" stroke-width="1" fill="none"/><path d="M91,0 L101,10 M101,0 L91,10" stroke="#000" stroke-width="1" fill="none" shape-rendering="auto"/></svg>
<div class="a" style="left:0px;top:30px;width:888px;height:25px;background:linear-gradient(#fcfcfc,#f0f0f0 90%);"></div>
<div class="a" style="left:0px;top:54px;width:888px;height:1px;background:#fff;"></div>
<div class="a grip" style="left:5px;top:34px;width:3px;height:16px"><i style="top:1px;left:1px;background:#fff"></i><i style="top:0px;background:#a3a3a3"></i><i style="top:5px;left:1px;background:#fff"></i><i style="top:4px;background:#a3a3a3"></i><i style="top:9px;left:1px;background:#fff"></i><i style="top:8px;background:#a3a3a3"></i><i style="top:13px;left:1px;background:#fff"></i><i style="top:12px;background:#a3a3a3"></i></div>
<svg class="a" style="left:13px;top:34px" width="16" height="16" viewBox="0 0 16 16"><rect width="16" height="16" fill="#fdfdfd"/><path d="M2.3,6.9 C3.4,3.6 6.9,2.1 10.2,3.2 L10.6,0.4 L13.9,4.7 L9.2,6.8 L9.6,5 C7,4.3 4.4,5.2 2.3,6.9 Z" fill="#2467dc"/><path d="M13.8,9.1 C12.7,12.4 9.2,13.9 5.9,12.8 L5.5,15.7 L2.6,11.3 L6.8,9.2 L6.5,11 C9.1,11.7 11.7,10.8 13.8,9.1 Z" fill="#3a8cf2"/></svg>
<div class="a" style="left:36px;top:35px;width:1px;height:15px;background:#bcbcbc;"></div><div class="a" style="left:37px;top:36px;width:1px;height:15px;background:#fdfdfd;"></div>
<span class="t" style="left:42.50px;top:33.84px;font-size:12px;line-height:16px;color:#000;transform:scaleX(0.9516);transform-origin:0 0;">From Page</span>
<div class="a" style="left:104px;top:31px;width:50px;height:23px;background:#fff;"></div>
<span class="t" style="left:106.80px;top:33.84px;font-size:12px;line-height:16px;color:#000;">0</span>
<div class="a" style="left:158px;top:35px;width:1px;height:15px;background:#bcbcbc;"></div><div class="a" style="left:159px;top:36px;width:1px;height:15px;background:#fdfdfd;"></div>
<span class="t" style="left:164.50px;top:33.84px;font-size:12px;line-height:16px;color:#000;transform:scaleX(0.8869);transform-origin:0 0;">Page Size</span>
<div class="a" style="left:218px;top:31px;width:63px;height:23px;background:#fff;"></div>
<div class="a" style="left:281px;top:32px;width:11px;height:21px;background:#e6e6e6;"></div>
<span class="t" style="left:223.00px;top:34.34px;font-size:12px;line-height:16px;color:#000;transform:scaleX(0.8224);transform-origin:0 0;">10</span>
<svg class="a" style="left:284px;top:41px" width="5" height="3" viewBox="0 0 5 3" shape-rendering="crispEdges"><path d="M0,0 H5 V1 H4 V2 H3 V3 H2 V2 H1 V1 H0 Z" fill="#000"/></svg>
<div class="a" style="left:297px;top:35px;width:1px;height:15px;background:#bcbcbc;"></div><div class="a" style="left:298px;top:36px;width:1px;height:15px;background:#fdfdfd;"></div>
<span class="t" style="left:303.60px;top:33.84px;font-size:12px;line-height:16px;color:#000;transform:scaleX(0.8625);transform-origin:0 0;">Go</span>
<svg class="a" style="left:324.6px;top:33.9px" width="16" height="16" viewBox="0 0 16 16"><circle cx="8" cy="8" r="7.9" fill="#fbfbfb"/><circle cx="8" cy="8" r="7.4" fill="#14a214" stroke="#0b8a0b" stroke-width=".7"/><g><path d="M1.2,8 L8.6,1.4 L8.6,14.6 Z" fill="#5cc85c" opacity=".55"/><path d="M2.1,8 L8.7,3.3 V6.1 H14.2 V10.1 H8.7 V12.9 Z" fill="#fbfffb"/></g></svg>
<svg class="a" style="left:348.4px;top:33.9px" width="16" height="16" viewBox="0 0 16 16"><circle cx="8" cy="8" r="7.9" fill="#fbfbfb"/><circle cx="8" cy="8" r="7.4" fill="#14a214" stroke="#0b8a0b" stroke-width=".7"/><g transform="translate(16,0) scale(-1,1)"><path d="M1.2,8 L8.6,1.4 L8.6,14.6 Z" fill="#5cc85c" opacity=".55"/><path d="M2.1,8 L8.7,3.3 V6.1 H14.2 V10.1 H8.7 V12.9 Z" fill="#fbfffb"/></g></svg>
<div class="a" style="left:371px;top:35px;width:1px;height:15px;background:#bcbcbc;"></div><div class="a" style="left:372px;top:36px;width:1px;height:15px;background:#fdfdfd;"></div>
<span class="t" style="left:377.60px;top:33.84px;font-size:12px;line-height:16px;color:#000;transform:scaleX(0.9525);transform-origin:0 0;">Filter by Type</span>
<div class="a" style="left:453px;top:35px;width:1px;height:15px;background:#bcbcbc;"></div><div class="a" style="left:454px;top:36px;width:1px;height:15px;background:#fdfdfd;"></div>
<div class="a" style="left:457px;top:31px;width:75px;height:23px;background:#fff;box-sizing:border-box;border:1px solid #0078d7"></div>
<div class="a" style="left:519px;top:32px;width:1px;height:21px;background:#0078d7;"></div>
<div class="a" style="left:520px;top:32px;width:11px;height:21px;background:#e6e6e6;"></div>
<div class="a" style="left:458px;top:32px;width:53.8px;height:21px;overflow:hidden"><span class="t" style="left:3.10px;top:2.44px;font-size:12px;line-height:16px;color:#000;transform:scaleX(0.9823);transform-origin:0 0;">Airlines boarding</span></div>
<svg class="a" style="left:523px;top:41px" width="5" height="3" viewBox="0 0 5 3" shape-rendering="crispEdges"><path d="M0,0 H5 V1 H4 V2 H3 V3 H2 V2 H1 V1 H0 Z" fill="#000"/></svg>
<div class="a" style="left:536px;top:35px;width:1px;height:15px;background:#bcbcbc;"></div><div class="a" style="left:537px;top:36px;width:1px;height:15px;background:#fdfdfd;"></div>
<span class="t" style="left:542.40px;top:33.84px;font-size:12px;line-height:16px;color:#000;transform:scaleX(0.9625);transform-origin:0 0;">Filter by Date</span>
<div class="a" style="left:616px;top:31px;width:100px;height:23px;background:#fff;"></div>
<div class="a" style="left:720px;top:35px;width:1px;height:15px;background:#bcbcbc;"></div><div class="a" style="left:721px;top:36px;width:1px;height:15px;background:#fdfdfd;"></div>
<span class="t" style="left:726.30px;top:33.84px;font-size:12px;line-height:16px;color:#000;transform:scaleX(0.9488);transform-origin:0 0;">Export Database</span>
<svg class="a" style="left:818px;top:34px" width="16" height="16" viewBox="0 0 16 16"><rect width="16" height="16" fill="#fdfdfd"/><rect x="8.6" y="3.2" width="6.2" height="10" fill="#fff" stroke="#1e7b4a" stroke-width=".8"/><path d="M9.6,5 H13.6 M9.6,7 H13.6 M9.6,9 H13.6 M9.6,11.2 H13.6" stroke="#1e7b4a" stroke-width="1.1" fill="none"/><path d="M11.6,3.4 V13" stroke="#fff" stroke-width=".7" fill="none"/><path d="M1.7,3 L9.4,1.5 V14.6 L1.7,13.1 Z" fill="#1a7a46"/><path d="M4.1,5.7 L7.2,10.4 M7.2,5.7 L4.1,10.4" stroke="#fff" stroke-width="1.25" fill="none"/></svg>
<div class="a" style="left:840px;top:33px;width:1px;height:20px;background:#bcbcbc;"></div><div class="a" style="left:841px;top:34px;width:1px;height:20px;background:#fdfdfd;"></div>
<div class="a" style="left:0px;top:55px;width:888px;height:400px;background:#000;"></div>
<div class="a" style="left:1px;top:56px;width:886px;height:398px;background:#ababab;"></div>
<div class="a" style="left:1px;top:56px;width:886px;height:17px;background:#f0f0f0;"></div>
<div class="a" style="left:1px;top:56px;width:886px;height:1px;background:#fff;"></div>
<div class="a" style="left:1px;top:56px;width:1px;height:17px;background:#fff;"></div>
<div class="a" style="left:1px;top:73px;width:886px;height:1px;background:#a0a0a0;"></div>
<div class="a" style="left:1px;top:56px;width:38.8px;height:17px;overflow:hidden"><span class="t" style="left:6.90px;top:1.74px;font-size:12px;line-height:16px;color:#000;">#</span></div>
<div class="a" style="left:41px;top:59px;width:1px;height:13px;background:#a0a0a0;"></div>
<div class="a" style="left:42px;top:56px;width:97.8px;height:17px;overflow:hidden"><span class="t" style="left:6.20px;top:1.74px;font-size:12px;line-height:16px;color:#000;transform:scaleX(0.8709);transform-origin:0 0;">Date</span></div>
<div class="a" style="left:141px;top:59px;width:1px;height:13px;background:#a0a0a0;"></div>
<div class="a" style="left:142px;top:56px;width:97.8px;height:17px;overflow:hidden"><span class="t" style="left:7.00px;top:1.74px;font-size:12px;line-height:16px;color:#000;transform:scaleX(0.8692);transform-origin:0 0;">Type</span></div>
<div class="a" style="left:241px;top:59px;width:1px;height:13px;background:#a0a0a0;"></div>
<div class="a" style="left:242px;top:56px;width:22.8px;height:17px;overflow:hidden"><span class="t" style="left:6.05px;top:1.74px;font-size:12px;line-height:16px;color:#000;transform:scaleX(0.8144);transform-origin:0 0;">Edit</span></div>
<div class="a" style="left:266px;top:59px;width:1px;height:13px;background:#a0a0a0;"></div>
<div class="a" style="left:267px;top:56px;width:97.8px;height:17px;overflow:hidden"><span class="t" style="left:5.80px;top:1.74px;font-size:12px;line-height:16px;color:#000;transform:scaleX(0.8250);transform-origin:0 0;">Comment</span></div>
<div class="a" style="left:366px;top:59px;width:1px;height:13px;background:#a0a0a0;"></div>
<div class="a" style="left:367px;top:56px;width:97.8px;height:17px;overflow:hidden"><span class="t" style="left:5.80px;top:1.74px;font-size:12px;line-height:16px;color:#000;transform:scaleX(0.8783);transform-origin:0 0;">A1</span></div>
<div class="a" style="left:466px;top:59px;width:1px;height:13px;background:#a0a0a0;"></div>
<div class="a" style="left:467px;top:56px;width:97.8px;height:17px;overflow:hidden"><span class="t" style="left:5.80px;top:1.74px;font-size:12px;line-height:16px;color:#000;transform:scaleX(0.8783);transform-origin:0 0;">A2</span></div>
<div class="a" style="left:566px;top:59px;width:1px;height:13px;background:#a0a0a0;"></div>
<div class="a" style="left:567px;top:56px;width:97.8px;height:17px;overflow:hidden"><span class="t" style="left:5.80px;top:1.74px;font-size:12px;line-height:16px;color:#000;transform:scaleX(0.8783);transform-origin:0 0;">A3</span></div>
<div class="a" style="left:666px;top:59px;width:1px;height:13px;background:#a0a0a0;"></div>
<div class="a" style="left:667px;top:56px;width:97.8px;height:17px;overflow:hidden"><span class="t" style="left:6.50px;top:1.74px;font-size:12px;line-height:16px;color:#000;transform:scaleX(0.8306);transform-origin:0 0;">A4</span></div>
<div class="a" style="left:766px;top:59px;width:1px;height:13px;background:#a0a0a0;"></div>
<div class="a" style="left:866px;top:59px;width:1px;height:13px;background:#a0a0a0;"></div>
<div class="a" style="left:1px;top:74px;width:886px;height:21px;background:#c8c8dc;"></div>
<div class="a" style="left:1px;top:95px;width:886px;height:1px;background:#a0a0a0;"></div>
<div class="a" style="left:41px;top:74px;width:1px;height:22px;background:#a0a0a0;"></div>
<div class="a" style="left:1px;top:74px;width:40px;height:21px;background:#0078d7;"></div>
<div class="a" style="left:1px;top:74px;width:40px;height:21px;overflow:hidden"><span class="t" style="left:4.20px;top:3.04px;font-size:12px;line-height:16px;color:#fff;transform:scaleX(0.8299);transform-origin:0 0;">21</span></div>
<div class="a" style="left:141px;top:74px;width:1px;height:22px;background:#a0a0a0;"></div>
<div class="a" style="left:42px;top:74px;width:99px;height:21px;overflow:hidden"><span class="t" style="left:3.30px;top:3.04px;font-size:12px;line-height:16px;color:#000;transform:scaleX(0.9332);transform-origin:0 0;">3/17/2021 8:53:...</span></div>
<div class="a" style="left:241px;top:74px;width:1px;height:22px;background:#a0a0a0;"></div>
<div class="a" style="left:142px;top:74px;width:99px;height:21px;overflow:hidden"><span class="t" style="left:3.20px;top:3.04px;font-size:12px;line-height:16px;color:#000;transform:scaleX(0.8584);transform-origin:0 0;">Airlines boarding ...</span></div>
<div class="a" style="left:266px;top:74px;width:1px;height:22px;background:#a0a0a0;"></div>
<svg class="a" style="left:244px;top:74px" width="20" height="20" viewBox="0 0 20 20"><rect width="20" height="20" fill="#fff"/><path d="M9,4.6 H2.2 V17.8 H15.6 V10.8" fill="none" stroke="#111" stroke-width="1.5"/><path d="M16.2,1.6 L18.6,4 L9,13.4 L6,14.2 L6.9,11.2 Z" fill="#fff" stroke="#111" stroke-width="1.3" stroke-linejoin="round"/><path d="M14.6,3.2 L17,5.6" stroke="#111" stroke-width="1.2"/><path d="M6,14.2 L6.9,11.2 L9,13.4 Z" fill="#333"/></svg>
<div class="a" style="left:366px;top:74px;width:1px;height:22px;background:#a0a0a0;"></div>
<div class="a" style="left:267px;top:74px;width:99px;height:21px;overflow:hidden"><span class="t" style="left:3.00px;top:3.04px;font-size:12px;line-height:16px;color:#000;transform:scaleX(0.8375);transform-origin:0 0;">AS</span></div>
<div class="a" style="left:466px;top:74px;width:1px;height:22px;background:#a0a0a0;"></div>
<div class="a" style="left:566px;top:74px;width:1px;height:22px;background:#a0a0a0;"></div>
<div class="a" style="left:666px;top:74px;width:1px;height:22px;background:#a0a0a0;"></div>
<div class="a" style="left:766px;top:74px;width:1px;height:22px;background:#a0a0a0;"></div>
<div class="a" style="left:866px;top:74px;width:1px;height:22px;background:#a0a0a0;"></div>
<div class="a" style="left:1px;top:96px;width:886px;height:21px;background:#c8c8dc;"></div>
<div class="a" style="left:1px;top:117px;width:886px;height:1px;background:#a0a0a0;"></div>
<div class="a" style="left:41px;top:96px;width:1px;height:22px;background:#a0a0a0;"></div>
<div class="a" style="left:1px;top:96px;width:40px;height:21px;overflow:hidden"><span class="t" style="left:4.20px;top:3.04px;font-size:12px;line-height:16px;color:#000;transform:scaleX(0.8449);transform-origin:0 0;">22</span></div>
<div class="a" style="left:141px;top:96px;width:1px;height:22px;background:#a0a0a0;"></div>
<div class="a" style="left:42px;top:96px;width:99px;height:21px;overflow:hidden"><span class="t" style="left:3.30px;top:3.04px;font-size:12px;line-height:16px;color:#000;transform:scaleX(0.9332);transform-origin:0 0;">3/17/2021 8:58:...</span></div>
<div class="a" style="left:241px;top:96px;width:1px;height:22px;background:#a0a0a0;"></div>
<div class="a" style="left:142px;top:96px;width:99px;height:21px;overflow:hidden"><span class="t" style="left:3.20px;top:3.04px;font-size:12px;line-height:16px;color:#000;transform:scaleX(0.8584);transform-origin:0 0;">Airlines boarding ...</span></div>
<div class="a" style="left:266px;top:96px;width:1px;height:22px;background:#a0a0a0;"></div>
<svg class="a" style="left:244px;top:96px" width="20" height="20" viewBox="0 0 20 20"><rect width="20" height="20" fill="#fff"/><path d="M9,4.6 H2.2 V17.8 H15.6 V10.8" fill="none" stroke="#111" stroke-width="1.5"/><path d="M16.2,1.6 L18.6,4 L9,13.4 L6,14.2 L6.9,11.2 Z" fill="#fff" stroke="#111" stroke-width="1.3" stroke-linejoin="round"/><path d="M14.6,3.2 L17,5.6" stroke="#111" stroke-width="1.2"/><path d="M6,14.2 L6.9,11.2 L9,13.4 Z" fill="#333"/></svg>
<div class="a" style="left:366px;top:96px;width:1px;height:22px;background:#a0a0a0;"></div>
<div class="a" style="left:466px;top:96px;width:1px;height:22px;background:#a0a0a0;"></div>
<div class="a" style="left:566px;top:96px;width:1px;height:22px;background:#a0a0a0;"></div>
<div class="a" style="left:666px;top:96px;width:1px;height:22px;background:#a0a0a0;"></div>
<div class="a" style="left:766px;top:96px;width:1px;height:22px;background:#a0a0a0;"></div>
<div class="a" style="left:866px;top:96px;width:1px;height:22px;background:#a0a0a0;"></div>
<div class="a" style="left:1px;top:118px;width:886px;height:21px;background:#c8c8dc;"></div>
<div class="a" style="left:1px;top:139px;width:886px;height:1px;background:#a0a0a0;"></div>
<div class="a" style="left:41px;top:118px;width:1px;height:22px;background:#a0a0a0;"></div>
<div class="a" style="left:1px;top:118px;width:40px;height:21px;overflow:hidden"><span class="t" style="left:4.40px;top:3.04px;font-size:12px;line-height:16px;color:#000;transform:scaleX(0.8299);transform-origin:0 0;">25</span></div>
<div class="a" style="left:141px;top:118px;width:1px;height:22px;background:#a0a0a0;"></div>
<div class="a" style="left:42px;top:118px;width:99px;height:21px;overflow:hidden"><span class="t" style="left:3.30px;top:3.04px;font-size:12px;line-height:16px;color:#000;transform:scaleX(0.9311);transform-origin:0 0;">3/17/2021 9:41:...</span></div>
<div class="a" style="left:241px;top:118px;width:1px;height:22px;background:#a0a0a0;"></div>
<div class="a" style="left:142px;top:118px;width:99px;height:21px;overflow:hidden"><span class="t" style="left:3.20px;top:3.04px;font-size:12px;line-height:16px;color:#000;transform:scaleX(0.8584);transform-origin:0 0;">Airlines boarding ...</span></div>
<div class="a" style="left:266px;top:118px;width:1px;height:22px;background:#a0a0a0;"></div>
<svg class="a" style="left:244px;top:118px" width="20" height="20" viewBox="0 0 20 20"><rect width="20" height="20" fill="#fff"/><path d="M9,4.6 H2.2 V17.8 H15.6 V10.8" fill="none" stroke="#111" stroke-width="1.5"/><path d="M16.2,1.6 L18.6,4 L9,13.4 L6,14.2 L6.9,11.2 Z" fill="#fff" stroke="#111" stroke-width="1.3" stroke-linejoin="round"/><path d="M14.6,3.2 L17,5.6" stroke="#111" stroke-width="1.2"/><path d="M6,14.2 L6.9,11.2 L9,13.4 Z" fill="#333"/></svg>
<div class="a" style="left:366px;top:118px;width:1px;height:22px;background:#a0a0a0;"></div>
<div class="a" style="left:267px;top:118px;width:99px;height:21px;overflow:hidden"><span class="t" style="left:2.40px;top:3.04px;font-size:12px;line-height:16px;color:#000;transform:scaleX(0.8879);transform-origin:0 0;">dgdsgdg</span></div>
<div class="a" style="left:466px;top:118px;width:1px;height:22px;background:#a0a0a0;"></div>
<div class="a" style="left:566px;top:118px;width:1px;height:22px;background:#a0a0a0;"></div>
<div class="a" style="left:666px;top:118px;width:1px;height:22px;background:#a0a0a0;"></div>
<div class="a" style="left:766px;top:118px;width:1px;height:22px;background:#a0a0a0;"></div>
<div class="a" style="left:866px;top:118px;width:1px;height:22px;background:#a0a0a0;"></div>
<div class="a" style="left:1px;top:140px;width:886px;height:21px;background:#c8c8dc;"></div>
<div class="a" style="left:1px;top:161px;width:886px;height:1px;background:#a0a0a0;"></div>
<div class="a" style="left:41px;top:140px;width:1px;height:22px;background:#a0a0a0;"></div>
<div class="a" style="left:1px;top:140px;width:40px;height:21px;overflow:hidden"><span class="t" style="left:4.40px;top:3.04px;font-size:12px;line-height:16px;color:#000;transform:scaleX(0.8299);transform-origin:0 0;">27</span></div>
<div class="a" style="left:141px;top:140px;width:1px;height:22px;background:#a0a0a0;"></div>
<div class="a" style="left:42px;top:140px;width:99px;height:21px;overflow:hidden"><span class="t" style="left:3.30px;top:3.04px;font-size:12px;line-height:16px;color:#000;transform:scaleX(0.9302);transform-origin:0 0;">3/18/2021 12:49...</span></div>
<div class="a" style="left:241px;top:140px;width:1px;height:22px;background:#a0a0a0;"></div>
<div class="a" style="left:142px;top:140px;width:99px;height:21px;overflow:hidden"><span class="t" style="left:3.20px;top:3.04px;font-size:12px;line-height:16px;color:#000;transform:scaleX(0.8584);transform-origin:0 0;">Airlines boarding ...</span></div>
<div class="a" style="left:266px;top:140px;width:1px;height:22px;background:#a0a0a0;"></div>
<svg class="a" style="left:244px;top:140px" width="20" height="20" viewBox="0 0 20 20"><rect width="20" height="20" fill="#fff"/><path d="M9,4.6 H2.2 V17.8 H15.6 V10.8" fill="none" stroke="#111" stroke-width="1.5"/><path d="M16.2,1.6 L18.6,4 L9,13.4 L6,14.2 L6.9,11.2 Z" fill="#fff" stroke="#111" stroke-width="1.3" stroke-linejoin="round"/><path d="M14.6,3.2 L17,5.6" stroke="#111" stroke-width="1.2"/><path d="M6,14.2 L6.9,11.2 L9,13.4 Z" fill="#333"/></svg>
<div class="a" style="left:366px;top:140px;width:1px;height:22px;background:#a0a0a0;"></div>
<div class="a" style="left:267px;top:140px;width:99px;height:21px;overflow:hidden"><span class="t" style="left:2.50px;top:3.04px;font-size:12px;line-height:16px;color:#000;transform:scaleX(0.8936);transform-origin:0 0;">aaaaaaaaaaaaaa</span></div>
<div class="a" style="left:466px;top:140px;width:1px;height:22px;background:#a0a0a0;"></div>
<div class="a" style="left:367px;top:140px;width:99px;height:21px;overflow:hidden"><span class="t" style="left:4.50px;top:3.04px;font-size:12px;line-height:16px;color:#000;transform:scaleX(0.8164);transform-origin:0 0;">111</span></div>
<div class="a" style="left:566px;top:140px;width:1px;height:22px;background:#a0a0a0;"></div>
<div class="a" style="left:467px;top:140px;width:99px;height:21px;overflow:hidden"><span class="t" style="left:3.10px;top:3.04px;font-size:12px;line-height:16px;color:#000;transform:scaleX(0.8922);transform-origin:0 0;">222 333</span></div>
<div class="a" style="left:666px;top:140px;width:1px;height:22px;background:#a0a0a0;"></div>
<div class="a" style="left:567px;top:140px;width:99px;height:21px;overflow:hidden"><span class="t" style="left:2.80px;top:3.04px;font-size:12px;line-height:16px;color:#000;transform:scaleX(0.8989);transform-origin:0 0;">444 555 666</span></div>
<div class="a" style="left:766px;top:140px;width:1px;height:22px;background:#a0a0a0;"></div>
<div class="a" style="left:667px;top:140px;width:99px;height:21px;overflow:hidden"><span class="t" style="left:3.50px;top:3.04px;font-size:12px;line-height:16px;color:#000;transform:scaleX(0.8600);transform-origin:0 0;">777</span></div>
<div class="a" style="left:866px;top:140px;width:1px;height:22px;background:#a0a0a0;"></div>
<div class="a" style="left:867px;top:140px;width:20px;height:21px;overflow:hidden"><span class="t" style="left:3.30px;top:3.04px;font-size:12px;line-height:16px;color:#000;transform:scaleX(0.8850);transform-origin:0 0;">888</span></div>
<div class="a" style="left:1px;top:162px;width:886px;height:21px;background:#c8c8dc;"></div>
<div class="a" style="left:1px;top:183px;width:886px;height:1px;background:#a0a0a0;"></div>
<div class="a" style="left:41px;top:162px;width:1px;height:22px;background:#a0a0a0;"></div>
<div class="a" style="left:1px;top:162px;width:40px;height:21px;overflow:hidden"><span class="t" style="left:4.40px;top:3.04px;font-size:12px;line-height:16px;color:#000;transform:scaleX(0.8299);transform-origin:0 0;">29</span></div>
<div class="a" style="left:141px;top:162px;width:1px;height:22px;background:#a0a0a0;"></div>
<div class="a" style="left:42px;top:162px;width:99px;height:21px;overflow:hidden"><span class="t" style="left:3.30px;top:3.04px;font-size:12px;line-height:16px;color:#000;transform:scaleX(0.9302);transform-origin:0 0;">3/18/2021 12:57...</span></div>
<div class="a" style="left:241px;top:162px;width:1px;height:22px;background:#a0a0a0;"></div>
<div class="a" style="left:142px;top:162px;width:99px;height:21px;overflow:hidden"><span class="t" style="left:3.20px;top:3.04px;font-size:12px;line-height:16px;color:#000;transform:scaleX(0.8584);transform-origin:0 0;">Airlines boarding ...</span></div>
<div class="a" style="left:266px;top:162px;width:1px;height:22px;background:#a0a0a0;"></div>
<svg class="a" style="left:244px;top:162px" width="20" height="20" viewBox="0 0 20 20"><rect width="20" height="20" fill="#fff"/><path d="M9,4.6 H2.2 V17.8 H15.6 V10.8" fill="none" stroke="#111" stroke-width="1.5"/><path d="M16.2,1.6 L18.6,4 L9,13.4 L6,14.2 L6.9,11.2 Z" fill="#fff" stroke="#111" stroke-width="1.3" stroke-linejoin="round"/><path d="M14.6,3.2 L17,5.6" stroke="#111" stroke-width="1.2"/><path d="M6,14.2 L6.9,11.2 L9,13.4 Z" fill="#333"/></svg>
<div class="a" style="left:366px;top:162px;width:1px;height:22px;background:#a0a0a0;"></div>
<div class="a" style="left:267px;top:162px;width:99px;height:21px;overflow:hidden"><span class="t" style="left:2.50px;top:3.04px;font-size:12px;line-height:16px;color:#000;transform:scaleX(0.9013);transform-origin:0 0;">aaaaaaaaaaaaa...</span></div>
<div class="a" style="left:466px;top:162px;width:1px;height:22px;background:#a0a0a0;"></div>
<div class="a" style="left:367px;top:162px;width:99px;height:21px;overflow:hidden"><span class="t" style="left:4.50px;top:3.04px;font-size:12px;line-height:16px;color:#000;transform:scaleX(0.8164);transform-origin:0 0;">111</span></div>
<div class="a" style="left:566px;top:162px;width:1px;height:22px;background:#a0a0a0;"></div>
<div class="a" style="left:467px;top:162px;width:99px;height:21px;overflow:hidden"><span class="t" style="left:3.10px;top:3.04px;font-size:12px;line-height:16px;color:#000;transform:scaleX(0.8922);transform-origin:0 0;">222 333</span></div>
<div class="a" style="left:666px;top:162px;width:1px;height:22px;background:#a0a0a0;"></div>
<div class="a" style="left:567px;top:162px;width:99px;height:21px;overflow:hidden"><span class="t" style="left:2.80px;top:3.04px;font-size:12px;line-height:16px;color:#000;transform:scaleX(0.8989);transform-origin:0 0;">444 555 666</span></div>
<div class="a" style="left:766px;top:162px;width:1px;height:22px;background:#a0a0a0;"></div>
<div class="a" style="left:667px;top:162px;width:99px;height:21px;overflow:hidden"><span class="t" style="left:3.50px;top:3.04px;font-size:12px;line-height:16px;color:#000;transform:scaleX(0.8600);transform-origin:0 0;">777</span></div>
<div class="a" style="left:866px;top:162px;width:1px;height:22px;background:#a0a0a0;"></div>
<div class="a" style="left:867px;top:162px;width:20px;height:21px;overflow:hidden"><span class="t" style="left:3.30px;top:3.04px;font-size:12px;line-height:16px;color:#000;transform:scaleX(0.8850);transform-origin:0 0;">888</span></div>
<span class="t" style="left:531.16px;top:77.04px;font-size:12px;line-height:16px;color:#000;transform:scaleX(0.9148);transform-origin:0 0;">w w...</span>
<span class="t" style="left:527.60px;top:121.04px;font-size:12px;line-height:16px;color:#000;transform:scaleX(0.9484);transform-origin:0 0;">df  x...</span>
<div class="a" style="left:1px;top:437px;width:886px;height:17px;background:repeating-conic-gradient(#fff 0 25%,#f0f0f0 0 50%) 0 0/2px 2px;"></div>
<div class="a" style="left:1px;top:437px;width:17px;height:17px;background:#f0f0f0;box-sizing:border-box;border:1px solid;border-color:#e3e3e3 #696969 #696969 #e3e3e3;box-shadow:inset 1px 1px 0 #fff,inset -1px -1px 0 #a0a0a0"></div>
<div class="a" style="left:18px;top:437px;width:514px;height:17px;background:#f0f0f0;box-sizing:border-box;border:1px solid;border-color:#e3e3e3 #696969 #696969 #e3e3e3;box-shadow:inset 1px 1px 0 #fff,inset -1px -1px 0 #a0a0a0"></div>
<div class="a" style="left:870px;top:437px;width:17px;height:17px;background:#f0f0f0;box-sizing:border-box;border:1px solid;border-color:#e3e3e3 #696969 #696969 #e3e3e3;box-shadow:inset 1px 1px 0 #fff,inset -1px -1px 0 #a0a0a0"></div>
<svg class="a" style="left:5.7px;top:442px" width="4" height="7" viewBox="0 0 4 7"><path d="M4,0 V7 L0,3.5 Z" fill="#000"/></svg>
<svg class="a" style="left:877px;top:442px" width="4" height="7" viewBox="0 0 4 7"><path d="M0,0 V7 L4,3.5 Z" fill="#000"/></svg>
<div class="a" style="left:0px;top:455px;width:888px;height:22px;background:#f0f0f0;box-sizing:border-box;border:1px solid #fff;border-left:0"></div>
<span class="t" style="left:4.00px;top:458.84px;font-size:12px;line-height:16px;color:#000;transform:scaleX(0.9897);transform-origin:0 0;">filtered 5 rows start from record 0 (total 10 rows)</span>
<svg class="a" style="left:875px;top:464px" width="11" height="11" viewBox="0 0 11 11" shape-rendering="crispEdges"><rect x="8" y="0" width="2" height="2" fill="#a6a6a6"/><rect x="4" y="4" width="2" height="2" fill="#a6a6a6"/><rect x="8" y="4" width="2" height="2" fill="#a6a6a6"/><rect x="0" y="8" width="2" height="2" fill="#a6a6a6"/><rect x="4" y="8" width="2" height="2" fill="#a6a6a6"/><rect x="8" y="8" width="2" height="2" fill="#a6a6a6"/></svg>
<div class="a" style="left:457px;top:54px;width:75px;height:92px;background:#fff;box-sizing:border-box;border:1px solid #6e6e6e"></div>
<div class="a" style="left:458px;top:55px;width:73px;height:15px;overflow:hidden;background:#fff"><span class="t" style="left:2.50px;top:-0.16px;font-size:12px;line-height:16px;color:#000;transform:scaleX(1.0645);transform-origin:0 0;">-- no filter --</span></div>
<div class="a" style="left:458px;top:70px;width:73px;height:15px;overflow:hidden;background:#0078d7"><span class="t" style="left:3.00px;top:-0.16px;font-size:12px;line-height:16px;color:#fff;transform:scaleX(0.9843);transform-origin:0 0;">Airlines boarding</span></div>
<div class="a" style="left:458px;top:85px;width:73px;height:15px;overflow:hidden;background:#fff"><span class="t" style="left:3.00px;top:-0.16px;font-size:12px;line-height:16px;color:#000;transform:scaleX(0.9194);transform-origin:0 0;">Royalty passenger</span></div>
<div class="a" style="left:458px;top:100px;width:73px;height:15px;overflow:hidden;background:#fff"><span class="t" style="left:3.00px;top:-0.16px;font-size:12px;line-height:16px;color:#000;transform:scaleX(1.0075);transform-origin:0 0;">Check-in/walk</span></div>
<div class="a" style="left:458px;top:115px;width:73px;height:15px;overflow:hidden;background:#fff"><span class="t" style="left:3.00px;top:-0.16px;font-size:12px;line-height:16px;color:#000;transform:scaleX(0.9885);transform-origin:0 0;">Credit card holder</span></div>
<div class="a" style="left:458px;top:130px;width:73px;height:15px;overflow:hidden;background:#fff"><span class="t" style="left:2.80px;top:-0.16px;font-size:12px;line-height:16px;color:#000;transform:scaleX(0.9783);transform-origin:0 0;">(unspecified)</span></div>
<svg class="a" style="left:498.8px;top:79.5px" width="13" height="21" viewBox="0 0 13 21"><path d="M0.5,0.6 V16.9 L4.3,13.3 L6.9,19.3 L9.3,18.3 L6.7,12.4 H11.9 Z" fill="#fff" fill-opacity=".88" stroke="#000" stroke-width="1" stroke-linejoin="miter"/></svg>
</div>
</body></html>
